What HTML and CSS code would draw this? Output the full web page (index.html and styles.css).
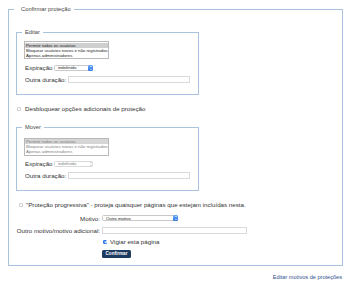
FILE: index.html
```html
<!DOCTYPE html>
<html lang="pt">
<head>
<meta charset="utf-8">
<title>Confirmar proteção</title>
<link rel="stylesheet" href="styles.css">
</head>
<body>
<form class="page">
  <fieldset class="outer">
    <legend class="outer-legend">Confirmar proteção</legend>

    <fieldset class="group">
      <legend class="group-legend">Editar</legend>
      <div class="listbox" role="listbox">
        <div class="opt selected">Permitir todos os usuários</div>
        <div class="opt">Bloquear usuários novos e não registrados</div>
        <div class="opt">Apenas administradores</div>
      </div>
      <div class="row row-exp">
        <span class="lbl">Expiração</span>
        <span class="select select-exp"><span class="select-text">indefinido</span><span class="arrows"></span></span>
      </div>
      <div class="row row-other">
        <span class="lbl">Outra duração:</span>
        <span class="input input-dur"></span>
      </div>
    </fieldset>

    <div class="check-row check-unlock">
      <span class="box"></span>
      <span>Desbloquear opções adicionais de proteção</span>
    </div>

    <fieldset class="group group-move">
      <legend class="group-legend">Mover</legend>
      <div class="listbox disabled" role="listbox">
        <div class="opt selected">Permitir todos os usuários</div>
        <div class="opt">Bloquear usuários novos e não registrados</div>
        <div class="opt">Apenas administradores</div>
      </div>
      <div class="row row-exp">
        <span class="lbl">Expiração</span>
        <span class="select select-exp disabled"><span class="select-text">indefinido</span><span class="arrows plain"></span></span>
      </div>
      <div class="row row-other">
        <span class="lbl">Outra duração:</span>
        <span class="input input-dur"></span>
      </div>
    </fieldset>

    <div class="check-row check-cascade">
      <span class="box"></span>
      <span>"Proteção progressiva" - proteja quaisquer páginas que estejam incluídas nesta.</span>
    </div>

    <div class="reason-grid">
      <span class="glbl">Motivo:</span>
      <span class="select select-reason"><span class="select-text">Outro motivo</span><span class="arrows"></span></span>
      <span class="glbl g-other">Outro motivo/motivo adicional:</span>
      <span class="input input-reason g-other"></span>
      <span class="g-watch"></span>
      <span class="watch g-watch"><span class="box checked"></span><span>Vigiar esta página</span></span>
      <span class="g-btn"></span>
      <span class="g-btn"><span class="button">Confirmar</span></span>
    </div>
  </fieldset>
  <div class="links"><a class="link" href="#">Editar motivos de proteções</a></div>
</form>
</body>
</html>
```

FILE: styles.css
```css
html, body {
  margin: 0;
  padding: 0;
  background: #fff;
}
body {
  font-family: "Liberation Sans", Arial, sans-serif;
  font-size: 6.2px;
  color: #333;
  padding: 6px 8px 0 8px;
}
.page {
  margin: 0;
}
.outer {
  margin: 0;
  border: 1px solid #a9c3df;
  padding: 16px 8px 7px 7px;
  width: 335px;
  box-sizing: border-box;
  min-width: 0;
}
.outer-legend {
  padding: 0 3px 0 7px;
  margin-left: -2px;
  line-height: 7px;
  font-size: 5.8px;
  color: #444;
}
.group {
  margin: 0;
  border: 1px solid #a9c3df;
  padding: 4px 7px 11px 7px;
  width: 183px;
  box-sizing: border-box;
  min-width: 0;
}
.group-move {
  margin-top: 12px;
}
.group-legend {
  padding: 0 3px;
  margin-left: -2px;
  line-height: 7px;
  font-size: 5.7px;
  color: #444;
}
.listbox {
  width: 85px;
  box-sizing: border-box;
  border: 1px solid #b9b9b9;
  padding: 0.5px 0;
  margin-top: 1px;
  font-size: 4.3px;
  line-height: 5px;
  color: #222;
}
.group-move .listbox {
  margin-top: 2.5px;
}
.listbox .opt {
  padding-left: 1px;
  white-space: nowrap;
  overflow: hidden;
}
.listbox .opt.selected {
  background: #cfcfcf;
}
.listbox.disabled {
  color: #808080;
}
.listbox.disabled .opt.selected {
  background: #d6d6d6;
}
.row {
  display: flex;
  align-items: center;
}
.row-exp {
  margin-top: 5px;
  height: 7px;
}
.group-move .row-exp {
  margin-top: 4.5px;
}
.row-other {
  margin-top: 4px;
  height: 8px;
}
.lbl {
  padding-left: 1px;
  white-space: nowrap;
}
.row-exp .lbl {
  width: 29px;
}
.row-other .lbl {
  width: 43px;
}
.select {
  display: inline-flex;
  align-items: center;
  justify-content: space-between;
  height: 6px;
  box-sizing: border-box;
  border: 1px solid #c9c9c9;
  border-radius: 1.5px;
  background: #fff;
  font-size: 4.3px;
  color: #222;
  padding-left: 3px;
  position: relative;
}
.select-exp {
  width: 39px;
}
.select.disabled {
  color: #808080;
  border-color: #d9d9d9;
}
.select-text {
  line-height: 5px;
  white-space: nowrap;
}
.arrows {
  width: 5px;
  height: 6px;
  margin-right: -1px;
  border-radius: 1.5px;
  background: linear-gradient(#6aa8f7, #2c74e6);
  position: relative;
}
.arrows::before, .arrows::after {
  content: "";
  position: absolute;
  left: 1.5px;
  width: 0;
  height: 0;
  border-left: 1px solid transparent;
  border-right: 1px solid transparent;
}
.arrows::before {
  top: 1px;
  border-bottom: 1.2px solid #fff;
}
.arrows::after {
  bottom: 1px;
  border-top: 1.2px solid #fff;
}
.arrows.plain {
  background: transparent;
}
.arrows.plain::before {
  border-bottom-color: #aaa;
}
.arrows.plain::after {
  border-top-color: #aaa;
}
.input {
  display: inline-block;
  height: 7px;
  box-sizing: border-box;
  border: 1px solid #dadada;
  background: #fff;
}
.input-dur {
  width: 122px;
}
.check-row {
  display: flex;
  align-items: center;
  line-height: 7px;
  padding-left: 1px;
}
.check-unlock {
  margin-top: 10px;
}
.check-cascade {
  margin-top: 10px;
  padding-left: 3px;
}
.check-cascade .box {
  margin-right: 3px;
}
.box {
  display: inline-block;
  width: 4px;
  height: 4px;
  box-sizing: border-box;
  border: 1px solid #cfcfcf;
  border-radius: 1px;
  background: #fff;
  margin-right: 4px;
  flex: none;
}
.box.checked {
  background: #2d78e8;
  border-color: #2d78e8;
  position: relative;
}
.box.checked::after {
  content: "";
  position: absolute;
  left: 0.5px;
  top: -0.3px;
  width: 1.3px;
  height: 2px;
  border-right: 0.8px solid #fff;
  border-bottom: 0.8px solid #fff;
  transform: rotate(40deg);
}
.reason-grid {
  display: grid;
  grid-template-columns: 84px 1fr;
  column-gap: 2px;
  align-items: center;
  margin-top: 6.5px;
}
.glbl {
  text-align: right;
  white-space: nowrap;
  line-height: 7px;
}
.g-other {
  margin-top: 5px;
}
.g-watch {
  margin-top: 4.5px;
}
.g-btn {
  margin-top: 3.5px;
}
.select-reason {
  width: 76px;
}
.input-reason {
  width: 145px;
  height: 7px;
}
.watch {
  display: flex;
  align-items: center;
  line-height: 7px;
  padding-left: 1px;
}
.watch .box {
  margin-right: 3px;
}
.button {
  display: inline-block;
  width: 29px;
  height: 8px;
  box-sizing: border-box;
  background: #1c3b60;
  border-radius: 1.5px;
  color: #fff;
  font-weight: bold;
  font-size: 4.6px;
  line-height: 8px;
  text-align: center;
}
.links {
  width: 334px;
  text-align: right;
  margin-top: 7.5px;
  line-height: 7px;
}
.link {
  color: #2f4f90;
  text-decoration: none;
  font-size: 5.6px;
}
```
